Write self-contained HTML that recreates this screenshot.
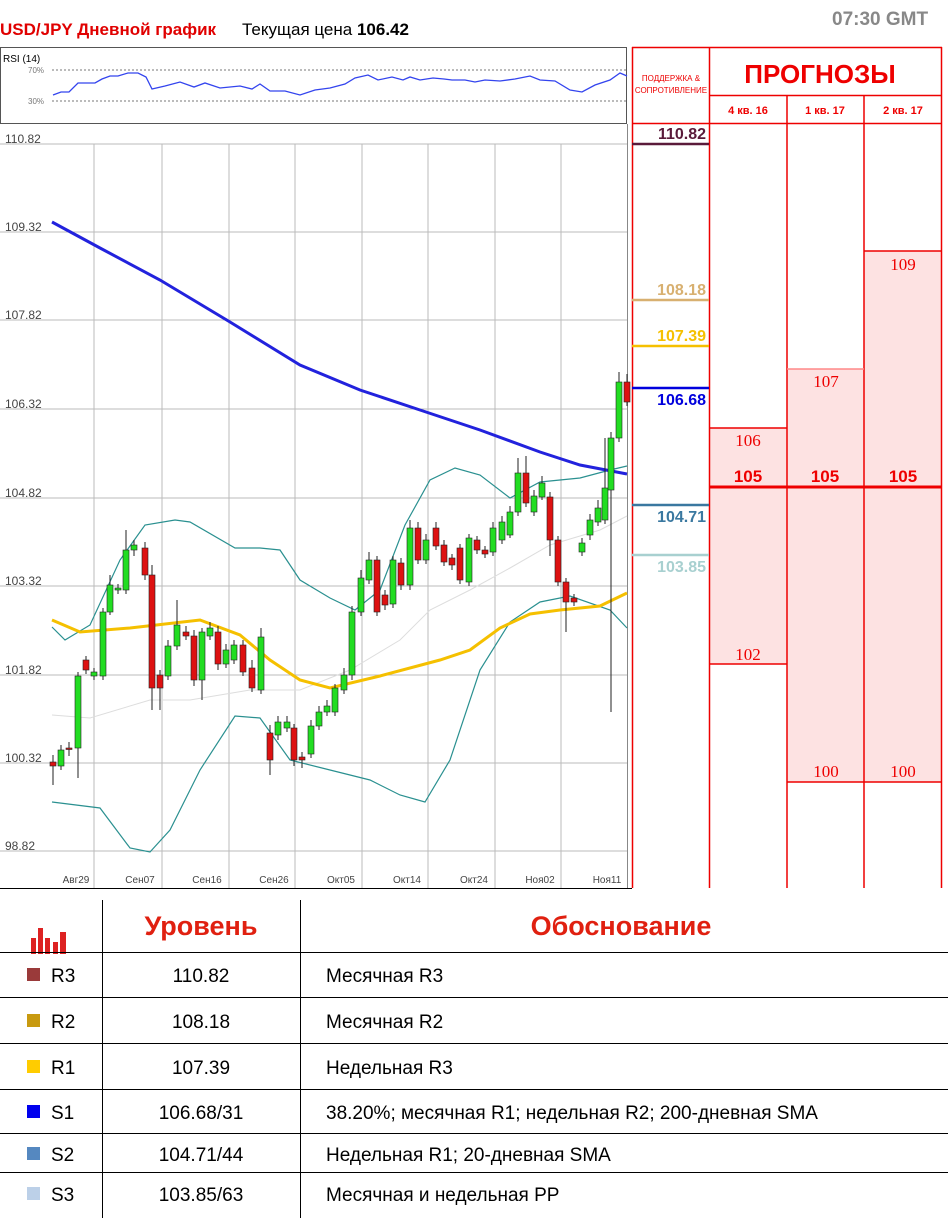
<!DOCTYPE html>
<html><head><meta charset="utf-8"><style>
body{margin:0;width:948px;height:1218px;background:#fff;position:relative;overflow:hidden;font-family:"Liberation Sans","DejaVu Sans",sans-serif}
.a{position:absolute}
</style></head><body>
<div class="a" style="left:0;top:20px;font-size:17px;font-weight:bold;color:#e00000">USD/JPY Дневной график</div>
<div class="a" style="left:242px;top:20px;font-size:17px;color:#000">Текущая цена <b>106.42</b></div>
<div class="a" style="left:832px;top:9px;font-size:19px;font-weight:bold;color:#888">07:30 GMT</div>

<svg class="a" style="left:0;top:0" width="948" height="890">
<!-- RSI box -->
<rect x="0.5" y="47.5" width="626" height="76" fill="#fff" stroke="#555"/>
<text x="3" y="62" font-size="10" font-family="Liberation Sans" fill="#000">RSI (14)</text>
<line x1="52" y1="70" x2="626" y2="70" stroke="#777" stroke-dasharray="2,2"/>
<line x1="52" y1="101" x2="626" y2="101" stroke="#777" stroke-dasharray="2,2"/>
<text x="28" y="73" font-size="8" fill="#777">70%</text>
<text x="28" y="104" font-size="8" fill="#777">30%</text>
<polyline fill="none" stroke="#3344ee" stroke-width="1.3" points="53,95 61,92 69,92 78,83 95,83 102,79 110,76 118,76 128,73 138,73 146,77 152,89 165,86 180,82 194,87 205,83 220,88 240,86 252,89 260,84 270,91 285,91 300,95 315,90 330,88 345,84 355,78 368,75 378,80 392,77 403,80 410,77 420,80 433,78 444,79 452,80 465,80 475,82 485,80 500,81 515,79 530,76 540,80 555,81 570,90 582,92 595,85 610,80 620,73 627,76"/>
<!-- main chart -->
<line x1="0" y1="888.5" x2="632" y2="888.5" stroke="#000"/>
<line x1="627.5" y1="124" x2="627.5" y2="888" stroke="#888"/>
<g stroke="#bbb" stroke-width="1">
<line x1="0" y1="144" x2="627" y2="144"/><line x1="0" y1="232" x2="627" y2="232"/><line x1="0" y1="320" x2="627" y2="320"/><line x1="0" y1="409" x2="627" y2="409"/><line x1="0" y1="498" x2="627" y2="498"/><line x1="0" y1="586" x2="627" y2="586"/><line x1="0" y1="675" x2="627" y2="675"/><line x1="0" y1="763" x2="627" y2="763"/><line x1="0" y1="851" x2="627" y2="851"/>
<line x1="94" y1="144" x2="94" y2="888"/><line x1="162" y1="144" x2="162" y2="888"/><line x1="229" y1="144" x2="229" y2="888"/><line x1="295" y1="144" x2="295" y2="888"/><line x1="362" y1="144" x2="362" y2="888"/><line x1="428" y1="144" x2="428" y2="888"/><line x1="495" y1="144" x2="495" y2="888"/><line x1="561" y1="144" x2="561" y2="888"/>
</g>
<g font-size="12" fill="#444" font-family="Liberation Sans">
<text x="5" y="143">110.82</text><text x="5" y="231">109.32</text><text x="5" y="319">107.82</text><text x="5" y="408">106.32</text><text x="5" y="497">104.82</text><text x="5" y="585">103.32</text><text x="5" y="674">101.82</text><text x="5" y="762">100.32</text><text x="5" y="850">98.82</text>
</g>
<g font-size="10" fill="#444" font-family="Liberation Sans" text-anchor="middle">
<text x="76" y="883">Авг29</text><text x="140" y="883">Сен07</text><text x="207" y="883">Сен16</text><text x="274" y="883">Сен26</text><text x="341" y="883">Окт05</text><text x="407" y="883">Окт14</text><text x="474" y="883">Окт24</text><text x="540" y="883">Ноя02</text><text x="607" y="883">Ноя11</text>
</g>
<polyline fill="none" stroke="#ddd" stroke-width="1" points="52,715 90,718 150,700 190,700 250,690 300,690 350,670 400,640 430,610 470,590 510,568 550,545 600,530 627,516"/>
<polyline fill="none" stroke="#2a9090" stroke-width="1.2" points="52,627 65,640 90,625 120,560 145,525 175,520 190,522 235,548 260,548 280,550 300,580 330,598 355,610 380,590 405,525 430,480 455,468 480,475 510,498 540,482 580,478 610,470 627,466"/>
<polyline fill="none" stroke="#2a9090" stroke-width="1.2" points="52,802 100,808 130,848 150,852 170,830 200,770 235,716 260,718 290,760 330,770 370,780 400,795 425,802 450,760 480,670 510,622 540,602 570,596 610,610 627,628"/>
<polyline fill="none" stroke="#f5c000" stroke-width="3" points="52,620 80,632 130,628 200,620 240,635 270,660 300,680 330,688 380,676 440,660 470,650 500,628 530,614 560,610 600,606 627,593"/>
<polyline fill="none" stroke="#2222dd" stroke-width="3" points="52,222 100,248 160,280 230,322 300,365 360,390 420,410 480,430 540,452 580,465 627,474"/>
<g id="c"></g>
<!-- right panel -->
<rect x="709" y="428" width="78" height="236" fill="#fde2e2"/>
<rect x="787" y="369" width="77" height="413" fill="#fde2e2"/>
<rect x="864" y="251" width="77" height="531" fill="#fde2e2"/>
<g stroke="#ee0000" stroke-width="1.5" fill="none">
<line x1="632.5" y1="47" x2="632.5" y2="888"/>
<line x1="709.5" y1="47" x2="709.5" y2="888"/>
<line x1="787" y1="95" x2="787" y2="888"/>
<line x1="864" y1="95" x2="864" y2="888"/>
<line x1="941.5" y1="47" x2="941.5" y2="888"/>
<line x1="632" y1="47.5" x2="942" y2="47.5"/>
<line x1="709" y1="95.5" x2="942" y2="95.5"/>
<line x1="632" y1="123.5" x2="942" y2="123.5"/>
<line x1="709" y1="428" x2="787" y2="428"/>
<line x1="709" y1="664" x2="787" y2="664"/>
<line x1="787" y1="369" x2="864" y2="369" stroke="#f88"/>
<line x1="787" y1="782" x2="942" y2="782"/>
<line x1="864" y1="251" x2="942" y2="251"/>
</g>
<line x1="709" y1="487" x2="942" y2="487" stroke="#ee0000" stroke-width="3"/>
<line x1="632" y1="144" x2="709" y2="144" stroke="#5a1a3a" stroke-width="2.5"/>
<line x1="632" y1="300" x2="709" y2="300" stroke="#d8b070" stroke-width="2.5"/>
<line x1="632" y1="346" x2="709" y2="346" stroke="#f5c000" stroke-width="2.5"/>
<line x1="632" y1="388" x2="709" y2="388" stroke="#0000dd" stroke-width="2.5"/>
<line x1="632" y1="505" x2="709" y2="505" stroke="#3a78a0" stroke-width="2.5"/>
<line x1="632" y1="555" x2="709" y2="555" stroke="#a8d0d0" stroke-width="2.5"/>
<g font-family="Liberation Sans" font-weight="bold" font-size="16" text-anchor="end">
<text x="706" y="139" fill="#5a1a3a">110.82</text>
<text x="706" y="295" fill="#d8b070">108.18</text>
<text x="706" y="341" fill="#f5c000">107.39</text>
<text x="706" y="405" fill="#0000dd">106.68</text>
<text x="706" y="522" fill="#3a78a0">104.71</text>
<text x="706" y="572" fill="#a8d0d0">103.85</text>
</g>
<g font-family="Liberation Sans" fill="#ee0000" text-anchor="middle">
<text x="671" y="81" font-size="8">ПОДДЕРЖКА &amp;</text>
<text x="671" y="93" font-size="8">СОПРОТИВЛЕНИЕ</text>
<text x="820" y="83" font-size="26" font-weight="bold">ПРОГНОЗЫ</text>
<text x="748" y="114" font-size="11" font-weight="bold">4 кв. 16</text>
<text x="825" y="114" font-size="11" font-weight="bold">1 кв. 17</text>
<text x="903" y="114" font-size="11" font-weight="bold">2 кв. 17</text>
<g font-size="17" font-weight="bold"><text x="748" y="482">105</text><text x="825" y="482">105</text><text x="903" y="482">105</text></g>
<g font-size="17" font-family="Liberation Serif"><text x="748" y="446">106</text><text x="748" y="660">102</text><text x="826" y="387">107</text><text x="826" y="777">100</text><text x="903" y="270">109</text><text x="903" y="777">100</text></g>
</g>
</svg>

<!-- table -->
<svg class="a" style="left:0;top:890px" width="948" height="328">
<g fill="#dd2222"><rect x="31" y="48" width="5" height="16"/><rect x="38" y="38" width="5" height="26"/><rect x="45" y="48" width="5" height="16"/><rect x="53" y="52" width="5" height="12"/><rect x="60" y="42" width="6" height="22"/></g>
<g stroke="#000" stroke-width="1">
<line x1="102.5" y1="10" x2="102.5" y2="328"/>
<line x1="300.5" y1="10" x2="300.5" y2="328"/>
<line x1="0" y1="62.5" x2="948" y2="62.5"/>
<line x1="0" y1="107.5" x2="948" y2="107.5"/>
<line x1="0" y1="153.5" x2="948" y2="153.5"/>
<line x1="0" y1="199.5" x2="948" y2="199.5"/>
<line x1="0" y1="243.5" x2="948" y2="243.5"/>
<line x1="0" y1="282.5" x2="948" y2="282.5"/>
</g>
<g font-family="Liberation Sans" font-weight="bold" font-size="27" fill="#e02010" text-anchor="middle">
<text x="201" y="45">Уровень</text><text x="621" y="45">Обоснование</text>
</g>
<rect x="27" y="78" width="13" height="13" fill="#9a3a3a"/>
<rect x="27" y="124" width="13" height="13" fill="#c89a10"/>
<rect x="27" y="170" width="13" height="13" fill="#ffcc00"/>
<rect x="27" y="215" width="13" height="13" fill="#0000ee"/>
<rect x="27" y="257" width="13" height="13" fill="#5588c0"/>
<rect x="27" y="297" width="13" height="13" fill="#bcd0e8"/>
<g font-family="Liberation Sans" font-size="19" fill="#000">
<text x="51" y="92">R3</text><text x="51" y="138">R2</text><text x="51" y="184">R1</text><text x="51" y="229">S1</text><text x="51" y="271">S2</text><text x="51" y="311">S3</text>
<g text-anchor="middle"><text x="201" y="92">110.82</text><text x="201" y="138">108.18</text><text x="201" y="184">107.39</text><text x="201" y="229">106.68/31</text><text x="201" y="271">104.71/44</text><text x="201" y="311">103.85/63</text></g>
<text x="326" y="92">Месячная R3</text><text x="326" y="138">Месячная R2</text><text x="326" y="184">Недельная R3</text><text x="326" y="229">38.20%; месячная R1; недельная R2; 200-дневная SMA</text><text x="326" y="271">Недельная R1; 20-дневная SMA</text><text x="326" y="311">Месячная и недельная PP</text>
</g>
</svg>
<script>
var d=[[53,762,766,755,785],[61,766,750,745,770],[69,748,748,742,756],[78,748,676,672,778],[86,660,670,656,674],[94,676,672,668,680],[103,676,612,608,680],[110,612,585,575,615],[118,590,588,584,594],[126,590,550,530,594],[134,550,545,540,556],[145,548,575,542,580],[152,575,688,565,710],[160,675,688,670,710],[168,676,646,640,680],[177,646,625,600,650],[186,632,636,626,640],[194,636,680,630,686],[202,680,632,628,700],[210,636,628,622,640],[218,632,664,626,670],[226,664,650,644,668],[234,660,645,640,664],[243,645,672,640,676],[252,668,688,660,692],[261,690,637,628,694],[270,733,760,725,775],[278,735,722,716,740],[287,728,722,716,732],[294,728,760,724,766],[302,757,760,752,768],[311,754,726,720,758],[319,726,712,706,730],[327,712,706,700,716],[335,712,688,684,716],[344,690,675,668,694],[352,675,612,606,680],[361,612,578,570,616],[369,580,560,552,584],[377,560,612,556,616],[385,595,605,590,610],[393,604,560,556,608],[401,563,585,558,590],[410,585,528,520,590],[418,528,560,522,564],[426,560,540,534,564],[436,528,546,522,550],[444,545,562,540,566],[452,558,565,554,570],[460,548,580,544,584],[469,582,538,534,586],[477,540,550,536,554],[485,550,554,546,558],[493,552,528,522,556],[502,540,522,516,544],[510,535,512,506,538],[518,512,473,458,516],[526,473,503,456,507],[534,512,496,490,516],[542,497,483,476,500],[550,497,540,492,556],[558,540,582,536,586],[566,582,602,578,632],[574,598,602,594,606],[582,552,543,538,556],[590,535,520,514,540],[598,522,508,500,526],[605,520,488,438,524],[611,490,438,432,712],[619,438,382,372,442],[627,382,402,374,406]];
var s='';d.forEach(function(c){var g=c[2]<c[1];var t=Math.min(c[1],c[2]),b=Math.max(c[1],c[2]);if(b-t<1.5)b=t+1.5;s+='<line x1="'+c[0]+'" y1="'+c[3]+'" x2="'+c[0]+'" y2="'+c[4]+'" stroke="#222"/><rect x="'+(c[0]-3)+'" y="'+t+'" width="6" height="'+(b-t)+'" fill="'+(g?'#22dd22':'#dd1111')+'" stroke="#222" stroke-width="0.6"/>';});
document.getElementById('c').innerHTML=s;
</script>
</body></html>
